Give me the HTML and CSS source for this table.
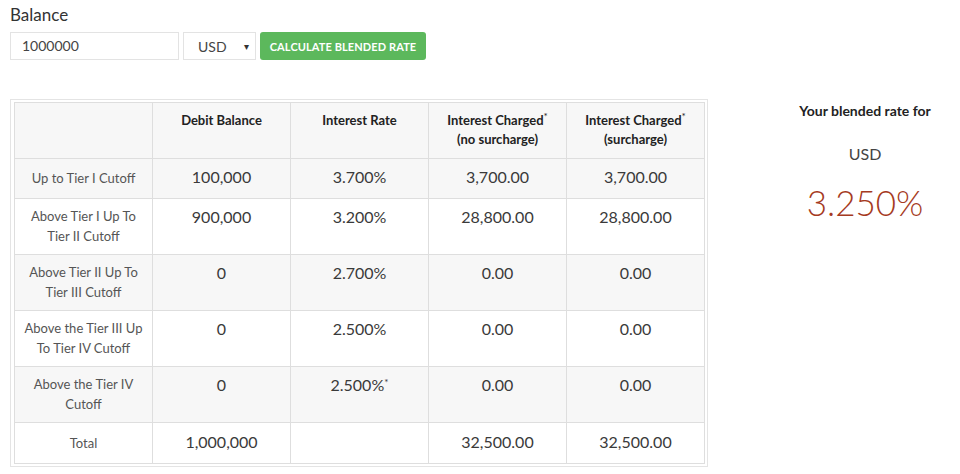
FILE: index.html
```html
<!DOCTYPE html>
<html>
<head>
<meta charset="utf-8">
<link rel="stylesheet" href="styles.css">
</head>
<body>
<div class="page">
  <div class="form">
    <div class="label">Balance</div>
    <div class="controls">
      <div class="input">1000000</div>
      <div class="select"><span>USD</span><span class="caret">▾</span></div>
      <div class="btn">CALCULATE BLENDED RATE</div>
    </div>
  </div>
  <div class="main">
    <div class="table-wrap">
      <table>
        <thead>
          <tr>
            <th></th>
            <th>Debit Balance</th>
            <th>Interest Rate</th>
            <th>Interest Charged<sup>*</sup><br>(no surcharge)</th>
            <th>Interest Charged<sup>*</sup><br>(surcharge)</th>
          </tr>
        </thead>
        <tbody>
          <tr class="odd first">
            <td class="lbl">Up to Tier I Cutoff</td>
            <td>100,000</td><td>3.700%</td><td>3,700.00</td><td>3,700.00</td>
          </tr>
          <tr>
            <td class="lbl">Above Tier I Up To<br>Tier II Cutoff</td>
            <td>900,000</td><td>3.200%</td><td>28,800.00</td><td>28,800.00</td>
          </tr>
          <tr class="odd">
            <td class="lbl">Above Tier II Up To<br>Tier III Cutoff</td>
            <td>0</td><td>2.700%</td><td>0.00</td><td>0.00</td>
          </tr>
          <tr>
            <td class="lbl">Above the Tier III Up<br>To Tier IV Cutoff</td>
            <td>0</td><td>2.500%</td><td>0.00</td><td>0.00</td>
          </tr>
          <tr class="odd">
            <td class="lbl">Above the Tier IV<br>Cutoff</td>
            <td>0</td><td>2.500%<sup>*</sup></td><td>0.00</td><td>0.00</td>
          </tr>
          <tr class="total">
            <td class="lbl">Total</td>
            <td>1,000,000</td><td></td><td>32,500.00</td><td>32,500.00</td>
          </tr>
        </tbody>
      </table>
    </div>
    <div class="result">
      <div class="r-title">Your blended rate for</div>
      <div class="r-cur">USD</div>
      <div class="r-rate">3.250%</div>
    </div>
  </div>
</div>
</body>
</html>
```

FILE: styles.css
```css
* { box-sizing: border-box; }
body {
  margin: 0;
  background: #fff;
  font-family: Lato, "Open Sans", sans-serif;
  color: #333;
}
.page { padding: 4px 10px 0 10px; }
.label {
  font-size: 17px;
  color: #333;
  line-height: 22px;
  height: 28px;
}
.controls { display: flex; gap: 4px; height: 28px; }
.input {
  width: 169px;
  border: 1px solid #e3e3e3;
  font-size: 14px;
  padding: 0 11px;
  line-height: 26px;
  color: #444;
}
.select {
  width: 73px;
  border: 1px solid #e3e3e3;
  display: flex;
  justify-content: space-between;
  align-items: center;
  padding: 0 6px 0 14px;
  font-size: 14px;
  color: #444;
}
.caret { font-size: 10px; color: #333; }
.btn {
  width: 166px;
  background: #5cb85c;
  border-radius: 3px;
  color: #fff;
  font-weight: 700;
  font-size: 11px;
  display: flex;
  align-items: center;
  justify-content: center;
  letter-spacing: 0.1px;
}
.main { display: flex; margin-top: 39px; }
.table-wrap {
  width: 698px;
  border: 1px solid #e4e4e4;
  padding: 2px 2px 2px 3px;
}
table {
  border-collapse: collapse;
  width: 100%;
  table-layout: fixed;
}
th, td {
  border: 1px solid #dedede;
  text-align: center;
  padding: 6px 4px 9px;
}
th {
  font-size: 13px;
  font-weight: 700;
  color: #222;
  line-height: 19px;
  vertical-align: top;
  background: #f7f7f7;
  height: 55px;
  padding-top: 8px;
}
sup { font-size: 10px; line-height: 0; vertical-align: 5px; font-weight: 400; }
td {
  font-size: 16px;
  line-height: 23px;
  vertical-align: top;
  color: #3a3a3a;
}
td.lbl {
  font-size: 13px;
  line-height: 20px;
  color: #555;
  vertical-align: middle;
  padding: 7px 4px 8px;
}
tr.first td { height: 40px; }
tr.odd td { background: #f7f7f7; }
tr.total td { height: 41px; padding-top: 7px; }
.result {
  flex: 1;
  display: flex;
  flex-direction: column;
  align-items: center;
  padding-top: 3px;
  padding-left: 72px;
}
.r-title { font-size: 14px; font-weight: 700; color: #222; line-height: 18px; }
.r-cur { font-size: 16px; color: #444; margin-top: 24px; line-height: 20px; }
.r-rate { font-size: 35px; font-weight: 300; color: #a53a22; margin-top: 17px; line-height: 42px; }
```
